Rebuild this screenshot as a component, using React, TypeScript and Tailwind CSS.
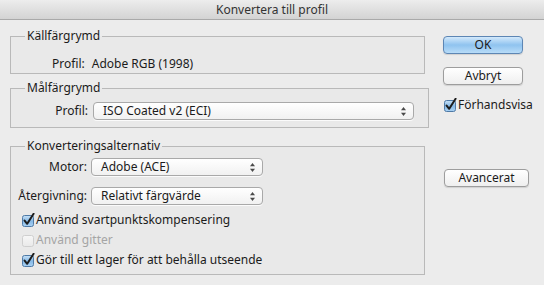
import React from "react";

const font = { fontFamily: '"Lucida Grande", "Noto Sans", "DejaVu Sans", sans-serif' };

function Check({ checked = true, disabled = false }: { checked?: boolean; disabled?: boolean }) {
  return (
    <svg width="14" height="14" viewBox="0 0 14 14" className="shrink-0">
      <defs>
        <linearGradient id="cbg" x1="0" y1="0" x2="0" y2="1">
          <stop offset="0" stopColor="#c9e2f7" />
          <stop offset="0.5" stopColor="#86b9e6" />
          <stop offset="1" stopColor="#a9d1f3" />
        </linearGradient>
        <linearGradient id="cbw" x1="0" y1="0" x2="0" y2="1">
          <stop offset="0" stopColor="#f7f7f7" />
          <stop offset="1" stopColor="#e9e9e9" />
        </linearGradient>
      </defs>
      {checked ? (
        <>
          <rect x="1.5" y="2.5" width="11" height="11" rx="2" fill="url(#cbg)" stroke="#4f7aa6" />
          <path d="M3.6 7.6 L6.2 10.8 L12.6 0.8" fill="none" stroke="#1c1c1c" strokeWidth="2" strokeLinecap="round" strokeLinejoin="round" />
        </>
      ) : (
        <rect x="1.5" y="2.5" width="11" height="11" rx="2" fill="url(#cbw)" stroke={disabled ? "#cfcfcf" : "#8a8a8a"} />
      )}
    </svg>
  );
}

function Arrows() {
  return (
    <svg width="7" height="11" viewBox="0 0 7 11" className="shrink-0">
      <path d="M3.5 1 L6 4.2 L1 4.2 Z" fill="#4a4a4a" />
      <path d="M3.5 10 L6 6.8 L1 6.8 Z" fill="#4a4a4a" />
    </svg>
  );
}

function Select({ value, w }: { value: string; w: string }) {
  return (
    <div
      className={`${w} h-[18px] flex items-center justify-between pl-[9px] pr-[6px] rounded-[4px] border border-[#a9a9a9] bg-gradient-to-b from-[#ffffff] to-[#f1f1f1] shadow-[0_1px_0_rgba(255,255,255,0.8)] text-[12px] text-[#1b1b1b]`}
    >
      <span className="leading-none">{value}</span>
      <Arrows />
    </div>
  );
}

function Button({ label, primary = false, w }: { label: string; primary?: boolean; w: string }) {
  return (
    <div
      className={`${w} h-[18px] flex items-center justify-center rounded-[4px] border text-[12px] text-[#1b1b1b] ${
        primary
          ? "border-[#5d86b4] bg-gradient-to-b from-[#d3e9fb] via-[#8fc3ef] to-[#b8dcf8]"
          : "border-[#9d9d9d] bg-gradient-to-b from-[#ffffff] to-[#efefef]"
      } shadow-[0_1px_1px_rgba(0,0,0,0.12)]`}
    >
      {label}
    </div>
  );
}

export default function App() {
  return (
    <div className="w-[544px] h-[285px] bg-[#ececec] overflow-hidden text-[#1b1b1b]" style={font}>
      <div className="h-[20px] flex items-center justify-center border-b border-[#a9a9a9] bg-gradient-to-b from-[#ededed] to-[#d3d3d3] text-[12px] text-[#333333]">
        Konvertera till profil
      </div>
      <div className="flex">
        <div className="w-[433px] pl-[10px] pr-[8px] flex flex-col">
          <fieldset className="mt-[8px] h-[46px] border border-[#b9b9b9] bg-[#e9e9e9] px-[14px]">
            <legend className="px-[2px] text-[12px] leading-[16px]">Källfärgrymd</legend>
            <div className="mt-[12px] pl-[27px] text-[12px] leading-[16px] flex gap-[7px]">
              <span>Profil:</span>
              <span>Adobe RGB (1998)</span>
            </div>
          </fieldset>
          <fieldset className="mt-[6px] h-[48px] border border-[#b9b9b9] bg-[#e9e9e9] px-[14px]">
            <legend className="px-[2px] text-[12px] leading-[16px]">Målfärgrymd</legend>
            <div className="mt-[6px] flex items-center">
              <span className="w-[68px] pr-[5px] text-right text-[12px]">Profil:</span>
              <Select value="ISO Coated v2 (ECI)" w="w-[321px]" />
            </div>
          </fieldset>
          <fieldset className="mt-[10px] h-[137px] border border-[#b9b9b9] bg-[#e9e9e9] px-[5px]">
            <legend className="ml-[9px] px-[2px] text-[12px] leading-[16px]">Konverteringsalternativ</legend>
            <div className="mt-[4px] flex items-center">
              <span className="w-[75px] pr-[4px] text-right text-[12px]">Motor:</span>
              <Select value="Adobe (ACE)" w="w-[172px]" />
            </div>
            <div className="mt-[11px] flex items-center">
              <span className="w-[75px] pr-[4px] text-right text-[12px]">Återgivning:</span>
              <Select value="Relativt färgvärde" w="w-[172px]" />
            </div>
            <div className="mt-[7px] pl-[5px] flex flex-col gap-[4px] text-[12px]">
              <div className="h-[16px] flex items-center gap-[1px]">
                <Check />
                <span>Använd svartpunktskompensering</span>
              </div>
              <div className="h-[16px] flex items-center gap-[1px]">
                <Check checked={false} disabled />
                <span className="text-[#a5a5a5]">Använd gitter</span>
              </div>
              <div className="h-[16px] flex items-center gap-[1px]">
                <Check />
                <span>Gör till ett lager för att behålla utseende</span>
              </div>
            </div>
          </fieldset>
        </div>
        <div className="pl-[10px] flex flex-col">
          <div className="mt-[16px]">
            <Button label="OK" primary w="w-[80px]" />
          </div>
          <div className="mt-[13px]">
            <Button label="Avbryt" w="w-[80px]" />
          </div>
          <div className="mt-[12px] h-[16px] flex items-center gap-[1px] text-[12px]">
            <Check />
            <span>Förhandsvisa</span>
          </div>
          <div className="mt-[56px] ml-[1px]">
            <Button label="Avancerat" w="w-[85px]" />
          </div>
        </div>
      </div>
    </div>
  );
}
